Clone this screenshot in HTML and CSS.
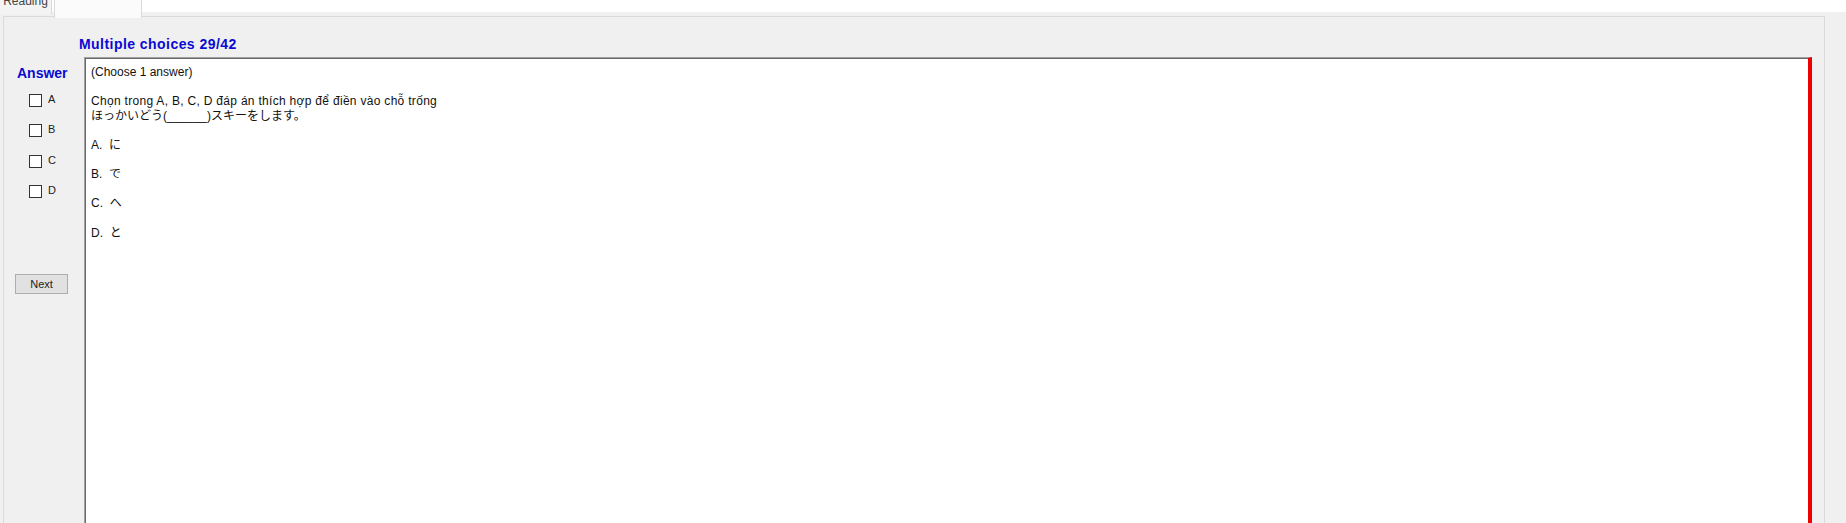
FILE: index.html
```html
<!DOCTYPE html>
<html>
<head>
<meta charset="utf-8">
<link rel="stylesheet" href="styles.css">
</head>
<body>
<div class="window">
  <div class="tabs">
    <div class="tab"><span class="tab-text">Reading</span></div>
    <div class="tab tab-active"><span class="tab-text">Japanese</span></div>
  </div>
  <div class="panel">
    <div class="title">Multiple choices 29/42</div>
    <div class="main">
      <div class="side">
        <div class="answer">Answer</div>
        <label class="choice"><span class="box"></span><span class="lbl">A</span></label>
        <label class="choice"><span class="box"></span><span class="lbl">B</span></label>
        <label class="choice"><span class="box"></span><span class="lbl">C</span></label>
        <label class="choice"><span class="box"></span><span class="lbl">D</span></label>
        <button class="next">Next</button>
      </div>
      <div class="textbox">
        <div class="text">(Choose 1 answer)

<span class="vi">Chọn trong A, B, C, D đáp án thích hợp để điền vào chỗ trống</span>
ほっかいどう(______)スキーをします。

A.  に

B.  で

C.  へ

D.  と</div>
      </div>
    </div>
  </div>
</div>
</body>
</html>
```
FILE: styles.css
```css
html, body {
  margin: 0;
  padding: 0;
  background: #ffffff;
  overflow: hidden;
  width: 1846px;
  height: 523px;
  font-family: "Liberation Sans", Arial, "Noto Sans CJK JP", sans-serif;
}
.window {
  height: 523px;
  display: flex;
  flex-direction: column;
  background: linear-gradient(#ffffff 0, #ffffff 12px, #f0f0f0 12px);
}
.tabs {
  height: 17px;
  display: flex;
  align-items: flex-start;
  margin-bottom: -1px;
  position: relative;
  z-index: 1;
}
.tab {
  width: 52px;
  height: 14px;
  box-sizing: border-box;
  background: #f4f4f4;
  border-right: 1px solid #dadada;
  font-size: 12px;
  line-height: 12px;
  color: #444;
  text-align: center;
  overflow: hidden;
}
.tab-text {
  display: block;
  margin-top: -5px;
}
.tab-active {
  width: 88px;
  height: 18px;
  margin-left: 2px;
  background: #fbfbfb;
  border-left: 1px solid #dadada;
  border-right: 1px solid #dadada;
  color: #fbfbfb;
}
.panel {
  margin-left: 3px;
  width: 1822px;
  flex: 1;
  box-sizing: border-box;
  border: 1px solid #dadada;
  border-bottom: none;
  background: #f0f0f0;
  padding-top: 18.5px;
  display: flex;
  flex-direction: column;
}
.title {
  margin-left: 75px;
  font-size: 14px;
  font-weight: bold;
  line-height: 16px;
  letter-spacing: 0.45px;
  color: #0a0ad2;
}
.main {
  margin-top: 5.5px;
  display: flex;
  flex: 1;
}
.side {
  width: 80px;
  display: flex;
  flex-direction: column;
}
.answer {
  margin-top: 8px;
  margin-left: 13px;
  font-size: 14px;
  font-weight: bold;
  line-height: 16px;
  color: #0a0ad2;
}
.choice {
  display: flex;
  align-items: flex-start;
  margin-left: 25px;
  height: 13px;
  margin-top: 17.5px;
}
.choice:first-of-type {
  margin-top: 12.5px;
}
.box {
  width: 11px;
  height: 11px;
  border: 1px solid #333333;
  background: #ffffff;
}
.lbl {
  margin-left: 6px;
  font-size: 11px;
  line-height: 11px;
  color: #222;
}
.next {
  margin-top: 75.5px;
  margin-left: 11px;
  width: 53px;
  height: 20px;
  padding: 0;
  border: 1px solid #adadad;
  background: #e1e1e1;
  font-family: "Liberation Sans", Arial, sans-serif;
  font-size: 11px;
  color: #222;
}
.textbox {
  flex: none;
  width: 1728px;
  box-sizing: border-box;
  background: #ffffff;
  border-top: 1px solid #a0a0a0;
  border-left: 1px solid #a0a0a0;
  border-right: 4px solid #ee0000;
  box-shadow: inset 1px 1px 0 #6a6a6a;
  padding: 7px 6px 5px;
}
.text {
  white-space: pre-wrap;
  font-size: 12px;
  line-height: 14.6px;
  color: #111;
  font-family: "Liberation Sans", Arial, "Noto Sans CJK JP", sans-serif;
}
.vi {
  letter-spacing: 0.3px;
}
```
